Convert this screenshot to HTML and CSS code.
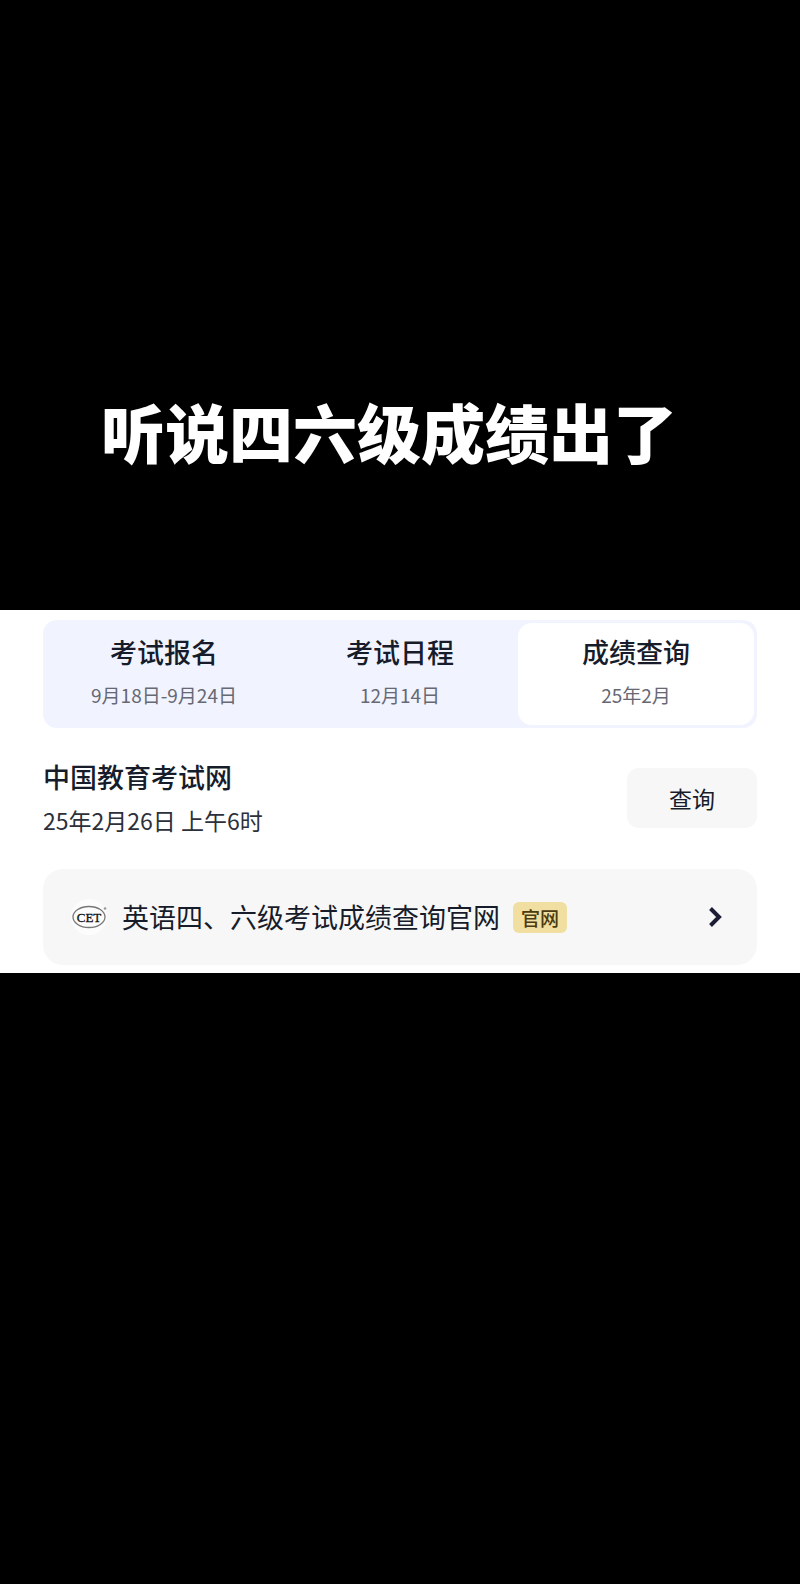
FILE: index.html
```html
<!DOCTYPE html>
<html lang="zh-CN">
<head>
    <meta charset="UTF-8">
    <meta name="viewport" content="width=device-width, initial-scale=1.0">
    <title>四六级成绩查询</title>
    <link rel="stylesheet" href="styles.css">
</head>
<body>
    <header class="caption">
        <h1>听说四六级成绩出了</h1>
    </header>

    <main class="panel">
        <div class="tabs">
            <button type="button" class="tab">
                <span class="tab-name">考试报名</span>
                <span class="tab-date">9月18日-9月24日</span>
            </button>
            <button type="button" class="tab">
                <span class="tab-name">考试日程</span>
                <span class="tab-date">12月14日</span>
            </button>
            <button type="button" class="tab active">
                <span class="tab-name">成绩查询</span>
                <span class="tab-date">25年2月</span>
            </button>
        </div>

        <section class="source">
            <div>
                <h2>中国教育考试网</h2>
                <p>25年2月26日 上午6时</p>
            </div>
            <button type="button" class="query">查询</button>
        </section>

        <a class="site" href="#">
            <svg class="logo" viewBox="0 0 36 36" aria-hidden="true">
                <circle cx="18" cy="18" r="18" fill="#fcfcfc"/>
                <ellipse cx="18" cy="18" rx="16" ry="10.5" fill="none" stroke="#777" stroke-width="1.3"/>
                <circle cx="34" cy="9.5" r="1.3" fill="#999"/>
                <text x="18" y="22.5" text-anchor="middle">CET</text>
            </svg>
            <span class="site-name">英语四、六级考试成绩查询官网</span>
            <span class="badge">官网</span>
            <svg class="arrow" viewBox="0 0 14 22" aria-hidden="true">
                <path d="M2.5 2.5 L11 11 L2.5 19.5" fill="none" stroke="#1d1d35" stroke-width="4"/>
            </svg>
        </a>
    </main>
</body>
</html>
```
FILE: styles.css
```css
* {
    box-sizing: border-box;
}

body {
    font-family: "Noto Sans CJK SC", sans-serif;
    background-color: #000;
    margin: 0;
    min-height: 100vh;
    color: #171c2b;
}

h1, h2, p {
    margin: 0;
}

button {
    font-family: inherit;
    color: inherit;
    border: none;
    padding: 0;
    cursor: pointer;
}

.caption {
    padding: 382px 22px 132px 0;
    text-align: center;
    color: #fff;
}

.caption h1 {
    font-size: 64px;
    line-height: 96px;
    font-weight: 900;
    white-space: nowrap;
}

.panel {
    background-color: #fff;
    padding: 10px 43px 8px;
}

.tabs {
    display: grid;
    grid-template-columns: repeat(3, 1fr);
    padding: 3px;
    border-radius: 14px;
    background-color: #f1f4ff;
}

.tab {
    display: flex;
    flex-direction: column;
    align-items: center;
    gap: 11px;
    padding: 11px 0 16px;
    border-radius: 14px;
    background-color: transparent;
}

.tab.active {
    background-color: #fff;
}

.tab-name {
    font-size: 27px;
    line-height: 36px;
    font-weight: 500;
}

.tab-date {
    font-size: 19px;
    line-height: 28px;
    color: #666873;
}

.source {
    display: flex;
    justify-content: space-between;
    align-items: center;
    margin: 31px 0 33px;
}

.source h2 {
    font-size: 27px;
    line-height: 36px;
    font-weight: 500;
    margin-bottom: 9px;
}

.source p {
    font-size: 23px;
    line-height: 32px;
    color: #2c303a;
}

.query {
    width: 130px;
    height: 60px;
    border-radius: 12px;
    background-color: #f7f7f7;
    font-size: 23px;
}

.site {
    display: flex;
    align-items: center;
    padding: 30px 35px 30px 28px;
    border-radius: 20px;
    background-color: #f7f7f7;
    color: inherit;
    text-decoration: none;
}

.logo {
    width: 36px;
    height: 36px;
    margin-right: 15px;
}

.logo text {
    font-family: "Liberation Serif", serif;
    font-size: 13px;
    fill: #111;
    stroke: #111;
    stroke-width: 0.3;
}

.site-name {
    font-size: 27px;
    line-height: 36px;
    white-space: nowrap;
}

.badge {
    margin-left: 13px;
    padding: 0 8px;
    border-radius: 6px;
    background-color: #f0dfa0;
    color: #4c3a10;
    font-size: 19px;
    line-height: 31px;
    font-weight: 500;
    white-space: nowrap;
}

.arrow {
    width: 14px;
    height: 22px;
    margin-left: auto;
}
```
